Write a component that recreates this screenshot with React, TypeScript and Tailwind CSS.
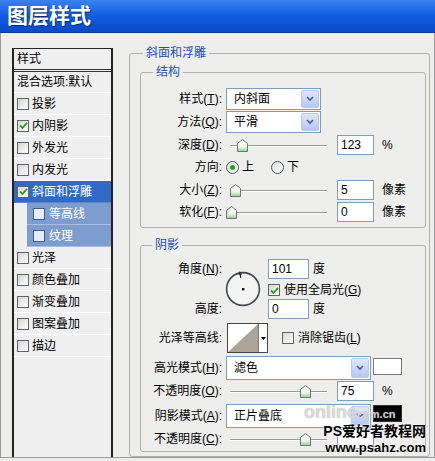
import React from "react";

const font = "font-['Liberation_Sans','Noto_Sans_CJK_SC',sans-serif]";

type Item = { label: string; checked?: boolean; active?: boolean; sub?: boolean };

const items: Item[] = [
  { label: "投影" },
  { label: "内阴影", checked: true },
  { label: "外发光" },
  { label: "内发光" },
  { label: "斜面和浮雕", checked: true, active: true },
  { label: "等高线", sub: true },
  { label: "纹理", sub: true },
  { label: "光泽" },
  { label: "颜色叠加" },
  { label: "渐变叠加" },
  { label: "图案叠加" },
  { label: "描边" },
];

function Check({ checked = false, tone = "normal" }: { checked?: boolean; tone?: "normal" | "blue" }) {
  return (
    <span
      className={`flex h-[12px] w-[12px] shrink-0 items-center justify-center border ${
        tone === "blue"
          ? "border-[#40608f] bg-[#e6edf8]"
          : "border-[#5a6470] bg-linear-to-br from-[#d6d6ce] to-white"
      }`}
    >
      {checked && (
        <svg width="9" height="9" viewBox="0 0 9 9">
          <path d="M1 4.5 L3.5 7 L8 1.8" fill="none" stroke="#21a121" strokeWidth="1.8" />
        </svg>
      )}
    </span>
  );
}

function Select({ value, w, h = 22 }: { value: string; w: number; h?: number }) {
  return (
    <div
      className={`flex items-center border border-[#7f9db9] bg-white p-[1px] ${h === 24 ? "h-[24px]" : "h-[22px]"}`}
      style={{ width: w }}
    >
      <span className="flex-1 pl-[6px] text-[12px] leading-none">{value}</span>
      <span className="flex h-full w-[18px] items-center justify-center rounded-[2px] border border-[#b7c8ea] bg-linear-to-b from-[#dfe8fb] to-[#b3c7f2]">
        <svg width="8" height="6" viewBox="0 0 8 6">
          <path d="M1 1 L4 4 L7 1" fill="none" stroke="#4a5f86" strokeWidth="1.6" />
        </svg>
      </span>
    </div>
  );
}

function Slider({ pos }: { pos: number }) {
  return (
    <div className="relative ml-[4px] h-[14px] w-[97px] shrink-0">
      <div className="absolute left-0 right-0 top-[7px] h-[2px] border-t border-[#999] bg-white" />
      <svg className="absolute top-[1px]" style={{ left: pos - 5 }} width="11" height="13" viewBox="0 0 11 13">
        <defs>
          <linearGradient id="th" x1="0" y1="0" x2="0" y2="1">
            <stop offset="0" stopColor="#ffffff" />
            <stop offset="0.6" stopColor="#eef5ee" />
            <stop offset="1" stopColor="#8fcf8f" />
          </linearGradient>
        </defs>
        <path d="M5.5 0.5 L10.5 4.5 L10.5 12.5 L0.5 12.5 L0.5 4.5 Z" fill="url(#th)" stroke="#6c786c" />
      </svg>
    </div>
  );
}

function Input({ value, w = 37 }: { value: string; w?: number }) {
  return (
    <div className="flex h-[20px] items-center border border-[#7f9db9] bg-white pl-[3px] text-[12px]" style={{ width: w }}>
      {value}
    </div>
  );
}

function Label({ children }: { children: React.ReactNode }) {
  return <div className="w-[81px] shrink-0 text-right text-[12px]">{children}</div>;
}

export default function App() {
  return (
    <div className={`relative h-[461px] w-[435px] overflow-hidden bg-[#ededeb] text-black ${font}`}>
      {/* title bar */}
      <div className="flex h-[33px] items-center border-b border-[#0a3a9a] bg-linear-to-b from-[#3a82f0] via-[#0f5ce0] to-[#0a4bc8] pl-[7px]">
        <span className="text-[21px] font-bold text-white [text-shadow:1px_1px_1px_#0a2a70]">图层样式</span>
      </div>

      <div className="flex h-[425px] border-x border-b border-[#9a9a9a]">
        {/* left list */}
        <div className="ml-[11px] mt-[15px] flex w-[101px] flex-col border-x-2 border-t border-[#222] bg-[#efefef] text-[12px]">
          <div className="flex h-[23px] items-center border-b-[3px] border-double border-[#333] pl-[3px]">样式</div>
          <div className="flex h-[21px] items-center border-b border-white pl-[3px]">混合选项:默认</div>
          {items.map((it) =>
            it.sub ? (
              <div key={it.label} className="ml-[13px] flex h-[22px] items-center gap-[4px] border-b border-[#a9bde0] bg-[#7d9ccf] pl-[6px] text-white">
                <Check tone="blue" />
                <span>{it.label}</span>
              </div>
            ) : (
              <div
                key={it.label}
                className={`flex h-[22px] items-center gap-[3px] border-b pl-[3px] ${
                  it.active ? "border-[#5a86cf] bg-[#316ac5] text-white" : "border-white"
                }`}
              >
                <Check checked={it.checked} />
                <span>{it.label}</span>
              </div>
            )
          )}
        </div>

        {/* right settings */}
        <fieldset className="ml-[16px] mt-[12px] h-[412px] w-[301px] rounded-[3px] border border-[#b0b0a6] pl-[10px] pr-[3px] pb-[5px]">
          <legend className="ml-[3px] px-[3px] text-[12px] leading-[16px] text-[#1f4fb0]">斜面和浮雕</legend>

          <fieldset className="mt-[3px] rounded-[3px] border border-[#b0b0a6] pt-[7px] pb-[4px]">
            <legend className="ml-[12px] px-[3px] text-[12px] leading-[16px] text-[#1f4fb0]">结构</legend>
            <div className="flex h-[23px] items-center gap-[4px]">
              <Label>样式(<u>T</u>):</Label>
              <Select value="内斜面" w={95} />
            </div>
            <div className="flex h-[23px] items-center gap-[4px]">
              <Label>方法(<u>Q</u>):</Label>
              <Select value="平滑" w={95} />
            </div>
            <div className="flex h-[23px] items-center gap-[4px]">
              <Label>深度(<u>D</u>):</Label>
              <Slider pos={12} />
              <div className="ml-[6px]"><Input value="123" /></div>
              <span className="ml-[4px] text-[12px]">%</span>
            </div>
            <div className="flex h-[22px] items-center gap-[4px] text-[12px]">
              <Label>方向:</Label>
              <span className="flex h-[13px] w-[13px] items-center justify-center rounded-full border border-[#4a5666] bg-linear-to-br from-[#dcdcd4] to-white">
                <span className="h-[5px] w-[5px] rounded-full bg-[#21a121]" />
              </span>
              <span className="ml-[-1px]">上</span>
              <span className="ml-[13px] h-[13px] w-[13px] rounded-full border border-[#4a5666] bg-linear-to-br from-[#dcdcd4] to-white" />
              <span className="ml-[-1px]">下</span>
            </div>
            <div className="flex h-[23px] items-center gap-[4px]">
              <Label>大小(<u>Z</u>):</Label>
              <Slider pos={5} />
              <div className="ml-[6px]"><Input value="5" /></div>
              <span className="ml-[4px] text-[12px]">像素</span>
            </div>
            <div className="flex h-[22px] items-center gap-[4px]">
              <Label>软化(<u>F</u>):</Label>
              <Slider pos={1} />
              <div className="ml-[6px]"><Input value="0" /></div>
              <span className="ml-[4px] text-[12px]">像素</span>
            </div>
          </fieldset>

          <fieldset className="mt-[9px] rounded-[3px] border border-[#b0b0a6] pt-[6px] pb-[1px]">
            <legend className="ml-[11px] px-[3px] text-[12px] leading-[16px] text-[#1f4fb0]">阴影</legend>

            <div className="flex h-[60px] items-center">
              <div className="flex h-full flex-col justify-between">
                <div className="flex h-[20px] items-center"><Label>角度(<u>N</u>):</Label></div>
                <div className="flex h-[20px] items-center"><Label>高度:</Label></div>
              </div>
              <svg className="ml-[3px] shrink-0" width="36" height="36" viewBox="0 0 36 36">
                <circle cx="18" cy="18" r="16.4" fill="#f4f4f2" stroke="#3e4852" strokeWidth="1.6" />
                <rect x="17" y="17" width="2.4" height="2.4" fill="#111" />
                <line x1="15.8" y1="6.8" x2="14.6" y2="0.6" stroke="#222" strokeWidth="1.2" />
                <line x1="13.2" y1="3" x2="17" y2="3" stroke="#222" strokeWidth="1" />
              </svg>
              <div className="ml-[7px] flex h-full flex-col text-[12px]">
                <div className="flex h-[20px] items-center">
                  <Input value="101" w={41} />
                  <span className="ml-[4px]">度</span>
                </div>
                <div className="flex h-[20px] items-center gap-[4px] pt-[2px]">
                  <Check checked />
                  <span>使用全局光(<u>G</u>)</span>
                </div>
                <div className="flex h-[20px] items-center">
                  <Input value="0" w={41} />
                  <span className="ml-[4px]">度</span>
                </div>
              </div>
            </div>

            <div className="mt-[4px] flex h-[30px] items-center gap-[4px] text-[12px]">
              <Label>光泽等高线:</Label>
              <div className="ml-[1px] flex h-[30px] w-[41px] border border-[#444] bg-white">
                <svg width="30" height="28" viewBox="0 0 30 28">
                  <polygon points="0,28 30,0 30,28" fill="#aaa598" />
                </svg>
                <div className="flex flex-1 items-center justify-center border-l border-[#777]">
                  <svg width="5" height="3" viewBox="0 0 5 3">
                    <polygon points="0,0 5,0 2.5,3" fill="#000" />
                  </svg>
                </div>
              </div>
              <div className="ml-[10px] flex items-center gap-[4px]">
                <Check />
                <span>消除锯齿(<u>L</u>)</span>
              </div>
            </div>

            <div className="mt-[3px] flex h-[24px] items-center gap-[4px]">
              <Label>高光模式(<u>H</u>):</Label>
              <Select value="滤色" w={145} h={24} />
              <div className="ml-[-2px] mt-[2px] h-[17px] w-[29px] self-start border border-[#7a7a7a] bg-white" />
            </div>
            <div className="flex h-[22px] items-center gap-[4px]">
              <Label>不透明度(<u>O</u>):</Label>
              <Slider pos={75} />
              <div className="ml-[6px]"><Input value="75" /></div>
              <span className="ml-[4px] text-[12px]">%</span>
            </div>
            <div className="mt-[2px] flex h-[24px] items-center gap-[4px]">
              <Label>阴影模式(<u>A</u>):</Label>
              <Select value="正片叠底" w={145} h={24} />
              <div className="ml-[-2px] mt-[1px] h-[17px] w-[29px] self-start border border-[#333] bg-black" />
            </div>
            <div className="flex h-[22px] items-center gap-[4px]">
              <Label>不透明度(<u>C</u>):</Label>
              <Slider pos={75} />
              <div className="ml-[6px]"><Input value="" /></div>
            </div>
          </fieldset>
        </fieldset>
      </div>

      {/* faint site watermark */}
      <div className="pointer-events-none absolute left-[304px] top-[403px] flex items-end font-['Liberation_Sans',sans-serif] font-bold text-white/60 [text-shadow:0_0_1px_#9a9a9a]">
        <span className="text-[18px] leading-[18px]">online</span>
        <span className="text-[11px] leading-[14px]">com.cn</span>
      </div>

      {/* PS watermark */}
      <div className="pointer-events-none absolute right-[9px] top-[422px] text-right font-bold text-black [text-shadow:0_0_2px_#fff,0_0_2px_#fff]">
        <div className="h-[18px] font-['Liberation_Sans','Noto_Sans_CJK_SC',sans-serif] text-[14px] leading-[18px]">PS爱好者教程网</div>
        <div className="h-[16px] font-['Liberation_Sans',sans-serif] text-[13px] leading-[16px]">www.psahz.com</div>
      </div>
    </div>
  );
}
